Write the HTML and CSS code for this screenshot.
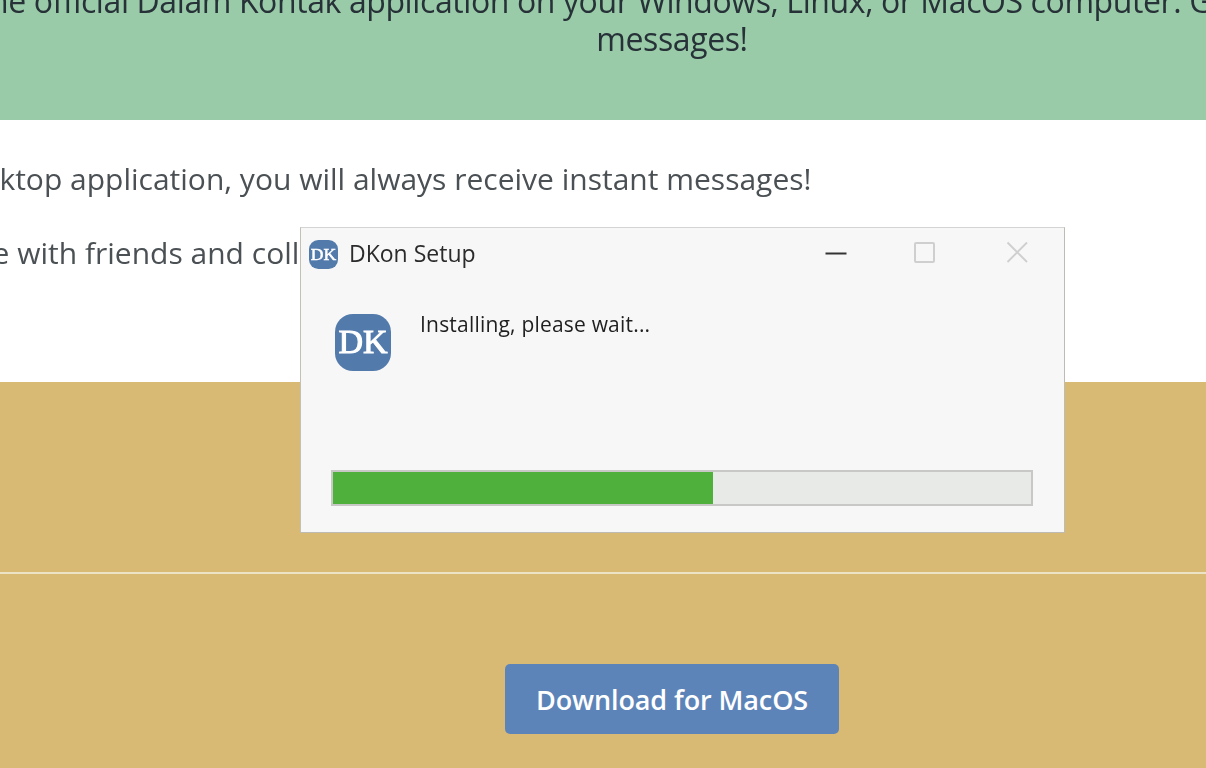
FILE: index.html
```html
<!DOCTYPE html>
<html lang="en">
<head>
<meta charset="utf-8">
<title>DKon Setup</title>
<link rel="stylesheet" href="styles.css">
</head>
<body>
<main class="page">
  <section class="hero">
    <p class="hero-text">Use the official Dalam Kontak application on your Windows, Linux, or MacOS computer. Get instant push messages!</p>
  </section>
  <section class="info">
    <p class="info-line">With the desktop application, you will always receive instant messages!</p>
    <p class="info-line shifted">Communicate with friends and colleagues</p>
  </section>
  <section class="downloads">
    <hr class="rule">
    <a class="button" href="#">Download for MacOS</a>
  </section>
</main>
<div class="dialog">
  <header class="titlebar">
    <svg class="app-icon small" viewBox="0 0 56 56"><rect width="56" height="56" rx="18" fill="#527aab"/><text x="28" y="38" text-anchor="middle" class="icon-text">DK</text></svg>
    <span class="title">DKon Setup</span>
    <span class="controls">
      <svg class="ctl" viewBox="0 0 24 24"><path d="M1.500 12.500H22.500" stroke="#333" stroke-width="2"/></svg>
      <svg class="ctl ctl-max" viewBox="0 0 24 24"><rect x="3" y="2" width="19" height="19" rx="1" fill="none" stroke="#cfcfcf" stroke-width="2"/></svg>
      <svg class="ctl" viewBox="0 0 24 24"><path d="M2.500 1.500L22 21M22 1.500L2.500 21" stroke="#cfcfcf" stroke-width="1.800" fill="none"/></svg>
    </span>
  </header>
  <div class="dialog-body">
    <svg class="app-icon large" viewBox="0 0 56 57"><rect width="56" height="57" rx="18" fill="#527aab"/><text x="28" y="39" text-anchor="middle" class="icon-text">DK</text></svg>
    <p class="status">Installing, please wait...</p>
  </div>
  <div class="progress"><div class="progress-fill"></div></div>
</div>
</body>
</html>
```
FILE: styles.css
```css
html, body {
  margin: 0;
  height: 768px;
  overflow: hidden;
  background: #fff;
  font-family: "Open Sans", "Noto Sans", sans-serif;
}

.page {
  width: 1744px;
  margin-left: -200px;
  filter: blur(0.4px);
}

.hero {
  height: 120px;
  background: #9acba8;
  box-sizing: border-box;
  padding: 0 100px;
  overflow: hidden;
}

.hero-text {
  margin: -18px 0 0;
  font-size: 32px;
  line-height: 38px;
  font-weight: 500;
  color: #273238;
  text-align: center;
  letter-spacing: -0.400px;
}

.info {
  height: 262px;
  box-sizing: border-box;
  padding: 37px 0 0 0;
  overflow: hidden;
}

.info-line {
  margin: 0 0 30px;
  font-size: 30px;
  line-height: 44px;
  color: #4a5054;
  padding-left: 24px;
}

.info-line.shifted {
  padding-left: 14px;
}

.downloads {
  height: 386px;
  background: #d8ba74;
  box-sizing: border-box;
  padding-top: 190px;
  display: flex;
  flex-direction: column;
  align-items: center;
}

.rule {
  width: 100%;
  height: 2px;
  margin: 0 0 90px;
  border: 0;
  background: #ece2c6;
}

.button {
  display: block;
  width: 334px;
  height: 70px;
  line-height: 72px;
  text-align: center;
  border-radius: 5px;
  background: #5d84b8;
  color: #fff;
  font-size: 27px;
  font-weight: 600;
  text-decoration: none;
  letter-spacing: -0.100px;
}

.dialog {
  position: absolute;
  left: 300px;
  top: 227px;
  width: 765px;
  height: 306px;
  box-sizing: border-box;
  background: #f7f7f7;
  border: 1px solid #bdbbb3;
  border-top-color: #d4d4d2;
  border-left-color: #c4c0b6;
  display: flex;
  flex-direction: column;
  padding: 0 31px 26px 8px;
  filter: blur(0.4px);
}

.titlebar {
  display: flex;
  align-items: center;
  height: 50px;
  margin-bottom: 2px;
}

.app-icon {
  display: block;
  flex: none;
}

.app-icon.small {
  width: 29px;
  height: 29px;
  margin-top: 2px;
}

.app-icon.large {
  width: 56px;
  height: 57px;
}

.icon-text {
  font-family: "Liberation Serif", serif;
  font-weight: 400;
  font-size: 34px;
  fill: #fff;
  stroke: #fff;
  stroke-width: 1px;
}

.title {
  margin-left: 11px;
  font-size: 23px;
  color: #2b2b2b;
}

.controls {
  margin-left: auto;
  display: flex;
  gap: 67px;
  margin-right: 4px;
  align-items: center;
}

.ctl {
  width: 24px;
  height: 24px;
  display: block;
}

.ctl-max {
  margin: 0 2px 0 -3px;
}

.dialog-body {
  display: flex;
  align-items: flex-start;
  flex: 1;
  padding: 34px 0 0 26px;
}

.status {
  margin: -4px 0 0 29px;
  font-size: 21px;
  line-height: 28px;
  color: #1f1f1f;
  letter-spacing: 0.200px;
}

.progress {
  margin-left: 22px;
  height: 36px;
  box-sizing: border-box;
  background: #e8eae7;
  border: 2px solid #c8c8c6;
}

.progress-fill {
  width: 54.400%;
  height: 100%;
  background: #50b03c;
}
```
